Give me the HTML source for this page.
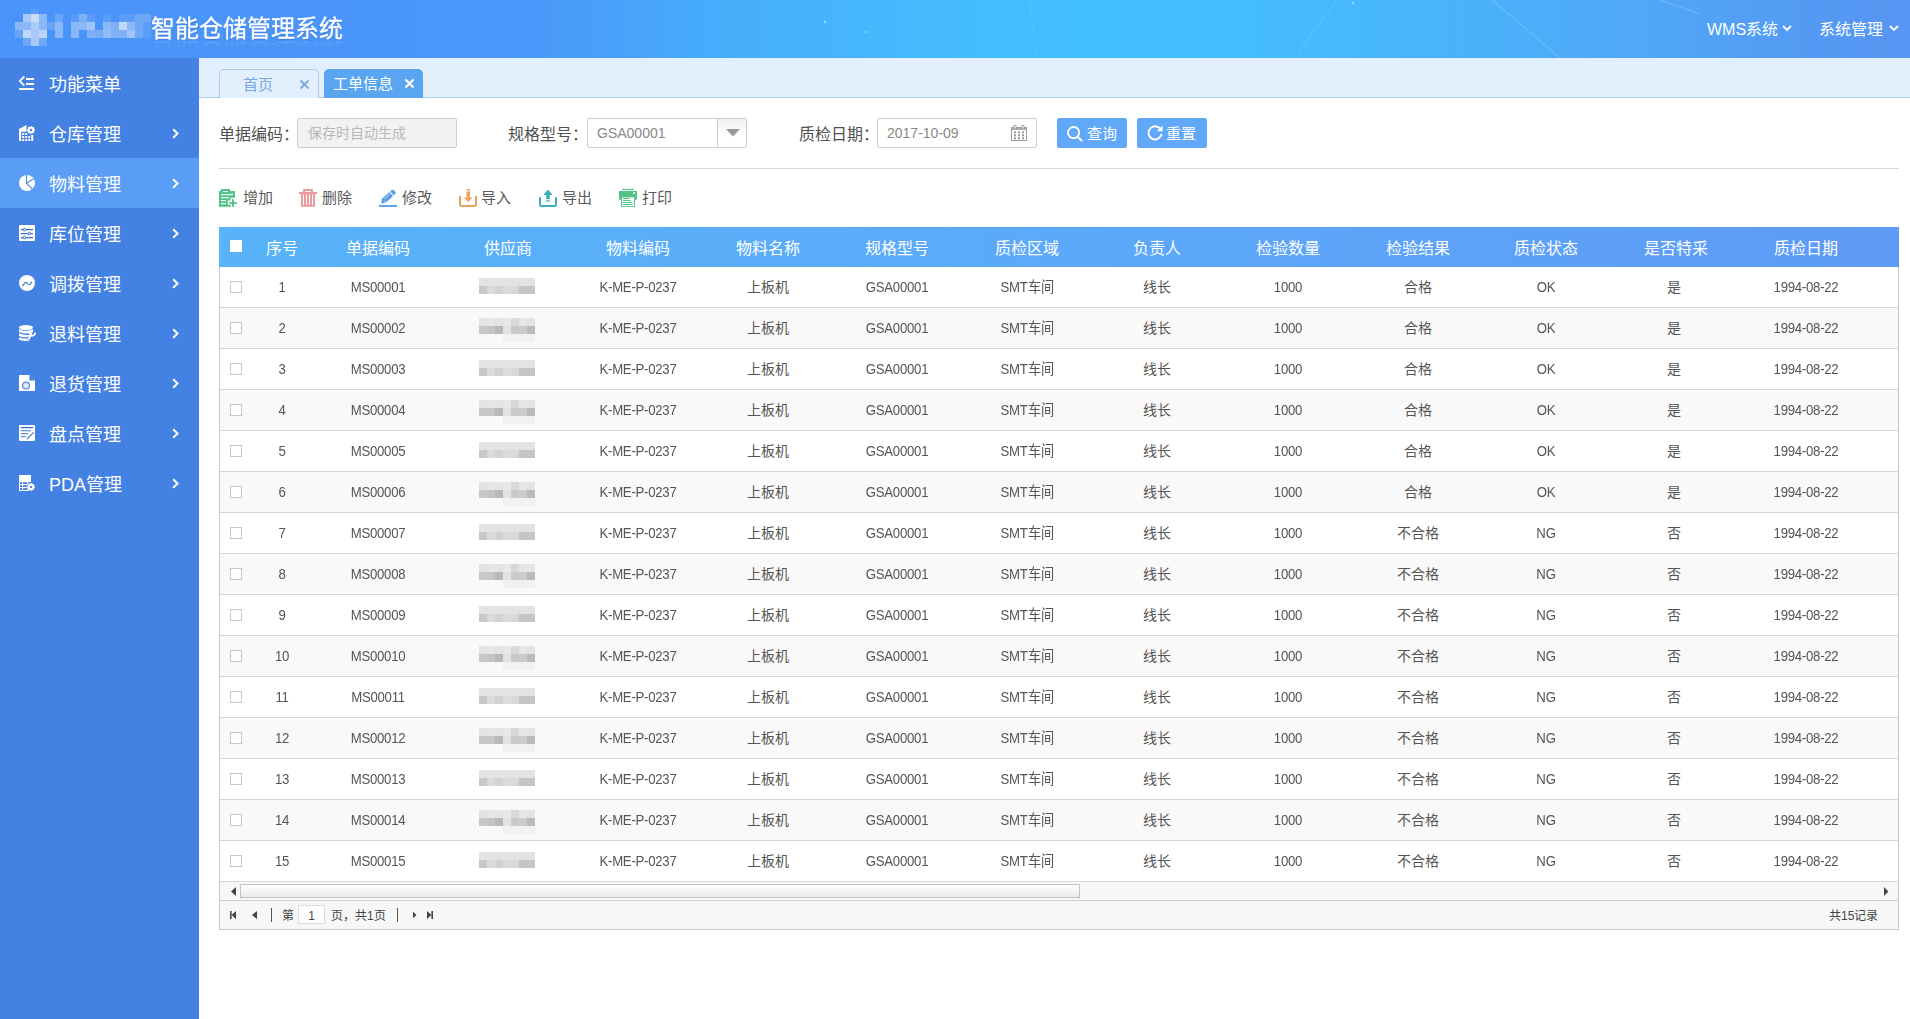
<!DOCTYPE html><html lang="zh-CN"><head><meta charset="utf-8"><style>
*{margin:0;padding:0;box-sizing:border-box}
html,body{width:1910px;height:1019px;overflow:hidden;background:#fff;font-family:"Liberation Sans",sans-serif;color:#333}
.abs{position:absolute}
svg{position:absolute;overflow:visible}
#hdr{position:absolute;left:0;top:0;width:1910px;height:58px;
 background:linear-gradient(90deg,#4993fa 0%,#4a95f9 20%,#4a98f9 28%,#47acfb 37%,#45b9fd 47%,#44c0fe 57%,#46bbfc 68%,#49b3fa 76%,#50a8f7 86%,#5499f3 95%,#5796f2 100%)}
#title{position:absolute;left:151px;top:9px;font-size:24px;-webkit-box-reflect:below -8px linear-gradient(transparent 66%,rgba(255,255,255,0.14) 88%);color:#fff;white-space:nowrap;text-shadow:0 1px 1px rgba(0,40,120,.25);-webkit-text-stroke:0.3px #fff}
.mz{position:absolute;width:8px;height:8px}
.hmenu{position:absolute;top:16px;font-size:16px;color:#fff;white-space:nowrap}
#side{position:absolute;left:0;top:58px;width:199px;height:961px;background:#4382e2}
.si{position:absolute;left:0;width:199px;height:50px;color:#fff;font-size:18px}
.si.act{background:#5a9df7}
.si .t{position:absolute;left:49px;top:12px;white-space:nowrap}
.si svg{left:19px;top:17px;width:16px;height:16px}
.si svg.chev{left:172px;top:20px;width:7px;height:11px}
#tabbar{position:absolute;left:199px;top:58px;width:1711px;height:40px;background:#e2f0fd;border-bottom:1px solid #a9cdec}
.tab{position:absolute;top:69px;height:29px;width:99px;border-radius:5px 5px 0 0;font-size:15px;white-space:nowrap}
.tab .t{position:absolute;top:3px}
.lbl{position:absolute;font-size:16px;color:#505050;white-space:nowrap;top:121px}
.inp{position:absolute;top:118px;height:30px;width:160px;border:1px solid #cdcdcd;border-radius:2px;font-size:14px;white-space:nowrap}
.btn{position:absolute;top:118px;height:30px;width:70px;background:#61a8f8;border-radius:2px;color:#fff;font-size:15px;white-space:nowrap}
.tb{position:absolute;top:186px;font-size:15px;color:#5a5a5a;white-space:nowrap}
.tbi{width:18px;height:18px}
#tbl{position:absolute;left:219px;top:227px;width:1680px;height:703px;border:1px solid #c8c8c8;border-top:none}
#th{position:absolute;left:-1px;top:0;width:1680px;height:40px;background:linear-gradient(90deg,#58b3f8 0%,#5aadf8 35%,#5da5f8 65%,#5e9bf6 100%);color:#fff;font-size:16px}
.row{position:absolute;left:0;width:1678px;height:41px;border-bottom:1px solid #d6d6d6;font-size:14px;color:#555}
.row.alt{background:#f9f9f9}
.c{position:absolute;top:0;text-align:center;white-space:nowrap;line-height:17px}
#th .c{top:13px;margin-left:1px}
.row .c{top:12px}
.row .lat{font-size:15px;letter-spacing:-0.3px;transform:scaleX(0.88);top:11px}
.cb{position:absolute;left:10px;width:12px;height:12px;border:1px solid #c8c8c8;background:#fff}
.bl{position:absolute;width:8px;height:8px}
#hs{position:absolute;left:0;top:655px;width:1678px;height:19px;background:#f7f7f7;border-bottom:1px solid #cfcfcf}
#pg{position:absolute;left:0;top:674px;width:1678px;height:28px;background:#f7f7f7;font-size:12px;color:#444}
</style></head><body>
<div id="hdr">
<div class="mz" style="left:31px;top:9px;height:5px;background:#5a9cf8"></div>
<div class="mz" style="left:23px;top:14px;height:8px;background:#a8c8f8"></div>
<div class="mz" style="left:31px;top:14px;height:8px;background:#c8dcfa"></div>
<div class="mz" style="left:39px;top:14px;height:8px;background:#8ab8f8"></div>
<div class="mz" style="left:55px;top:14px;height:8px;background:#6aa4f8"></div>
<div class="mz" style="left:71px;top:14px;height:8px;background:#5a9cf8"></div>
<div class="mz" style="left:79px;top:14px;height:8px;background:#7ab0f8"></div>
<div class="mz" style="left:87px;top:14px;height:8px;background:#5a9cf8"></div>
<div class="mz" style="left:103px;top:14px;height:8px;background:#5a9cf8"></div>
<div class="mz" style="left:119px;top:14px;height:8px;background:#5a9cf8"></div>
<div class="mz" style="left:127px;top:14px;height:8px;background:#5a9cf8"></div>
<div class="mz" style="left:135px;top:14px;height:8px;background:#70a8f8"></div>
<div class="mz" style="left:143px;top:14px;height:8px;background:#70a8f8"></div>
<div class="mz" style="left:15px;top:22px;height:8px;background:#88b8f8"></div>
<div class="mz" style="left:23px;top:22px;height:8px;background:#8ab8f8"></div>
<div class="mz" style="left:31px;top:22px;height:8px;background:#a8ccf8"></div>
<div class="mz" style="left:39px;top:22px;height:8px;background:#8ab8f8"></div>
<div class="mz" style="left:47px;top:22px;height:8px;background:#6aa4f8"></div>
<div class="mz" style="left:55px;top:22px;height:8px;background:#8ab8f8"></div>
<div class="mz" style="left:71px;top:22px;height:8px;background:#8ab8f8"></div>
<div class="mz" style="left:79px;top:22px;height:8px;background:#8ab8f8"></div>
<div class="mz" style="left:87px;top:22px;height:8px;background:#a0c4f8"></div>
<div class="mz" style="left:103px;top:22px;height:8px;background:#8ab8f8"></div>
<div class="mz" style="left:111px;top:22px;height:8px;background:#80b0f8"></div>
<div class="mz" style="left:119px;top:22px;height:8px;background:#c0d8fa"></div>
<div class="mz" style="left:127px;top:22px;height:8px;background:#8ab8f8"></div>
<div class="mz" style="left:135px;top:22px;height:8px;background:#70a8f8"></div>
<div class="mz" style="left:143px;top:22px;height:8px;background:#5a9cf8"></div>
<div class="mz" style="left:15px;top:30px;height:8px;background:#6aa4f8"></div>
<div class="mz" style="left:23px;top:30px;height:8px;background:#c0d8fa"></div>
<div class="mz" style="left:31px;top:30px;height:8px;background:#a8c8f8"></div>
<div class="mz" style="left:39px;top:30px;height:8px;background:#b8d4fa"></div>
<div class="mz" style="left:55px;top:30px;height:8px;background:#88b8f8"></div>
<div class="mz" style="left:71px;top:30px;height:8px;background:#88b8f8"></div>
<div class="mz" style="left:87px;top:30px;height:8px;background:#80b0f8"></div>
<div class="mz" style="left:95px;top:30px;height:8px;background:#78acf8"></div>
<div class="mz" style="left:103px;top:30px;height:8px;background:#90bcf8"></div>
<div class="mz" style="left:111px;top:30px;height:8px;background:#80b0f8"></div>
<div class="mz" style="left:119px;top:30px;height:8px;background:#80b0f8"></div>
<div class="mz" style="left:127px;top:30px;height:8px;background:#a0c4f8"></div>
<div class="mz" style="left:135px;top:30px;height:8px;background:#70a8f8"></div>
<div class="mz" style="left:143px;top:30px;height:8px;background:#5a9cf8"></div>
<div class="mz" style="left:23px;top:38px;height:8px;background:#70a8f8"></div>
<div class="mz" style="left:31px;top:38px;height:8px;background:#a8c8f8"></div>
<div class="mz" style="left:39px;top:38px;height:8px;background:#70a8f8"></div>
<svg viewBox="0 0 1910 58" style="left:0;top:0;width:1910px;height:58px"><g stroke="#fff" stroke-width="1" fill="none"><path d="M1492 0 L1560 58" stroke-opacity="0.22"/><path d="M1337 0 L1298 52" stroke-opacity="0.15"/><path d="M1660 0 L1700 14" stroke-opacity="0.2"/><path d="M1030 0 L1036 58" stroke-opacity="0.08"/></g><g fill="#fff"><circle cx="825" cy="22" r="1.3" fill-opacity="0.5"/><circle cx="866" cy="32" r="1.1" fill-opacity="0.4"/><circle cx="1353" cy="3" r="1.3" fill-opacity="0.4"/></g></svg>
<div id="title">智能仓储管理系统</div>
<div class="hmenu" style="left:1707px">WMS系统</div><svg viewBox="0 0 10 7" style="width:10px;height:7px;top:25px;left:1782px"><path d="M1 1 L5 5 L9 1" stroke="#fff" stroke-width="1.8" fill="none"/></svg><div class="hmenu" style="left:1819px">系统管理</div><svg viewBox="0 0 10 7" style="width:10px;height:7px;top:25px;left:1889px"><path d="M1 1 L5 5 L9 1" stroke="#fff" stroke-width="1.8" fill="none"/></svg>
</div>
<div id="side"></div>
<div class="si" style="top:58px"><svg viewBox="0 0 16 16"><path d="M5.3 1.5 L0.8 6.1 L5.3 10.7" stroke="#fff" stroke-width="1.8" fill="none"/><rect x="7" y="3" width="8" height="2" fill="#fff"/><rect x="7" y="8" width="8" height="2" fill="#fff"/><rect x="0" y="13" width="15" height="2" fill="#fff"/></svg><div class="t">功能菜单</div></div>
<div class="si" style="top:108px"><svg viewBox="0 0 16 16"><path d="M0 4 L7.5 0 L7.5 6.8 L2.2 6.8 L2.2 16 L0 16 Z" fill="#fff"/><g fill="#fff"><rect x="3.2" y="8" width="2" height="2"/><rect x="6.2" y="8" width="2" height="2"/><rect x="3.2" y="11" width="2" height="2"/><rect x="6.2" y="11" width="2" height="2"/><rect x="9.2" y="11" width="2" height="2"/><rect x="3.2" y="14" width="2" height="2"/><rect x="6.2" y="14" width="2" height="2"/><rect x="9.2" y="14" width="2" height="2"/><rect x="12.2" y="10" width="2" height="6"/></g><circle cx="12" cy="5" r="2.6" stroke="#fff" stroke-width="1.8" fill="none"/><g stroke="#fff" stroke-width="1.3"><path d="M12 1.2V8.8M8.2 5H15.8M9.3 2.3L14.7 7.7M14.7 2.3L9.3 7.7"/></g><circle cx="12" cy="5" r="1.2" fill="#4382e2"/></svg><div class="t">仓库管理</div><svg class="chev" viewBox="0 0 7 11"><path d="M1.2 1.2 L5.5 5.5 L1.2 9.8" stroke="#fff" stroke-width="2" fill="none"/></svg></div>
<div class="si act" style="top:158px"><svg viewBox="0 0 16 16"><circle cx="8" cy="8" r="8" fill="#fff"/><path d="M7.5 0 V8.3 L14.6 3.8 M7.5 8.3 L13.4 14" stroke="#4f88dc" stroke-width="1.1" fill="none"/></svg><div class="t">物料管理</div><svg class="chev" viewBox="0 0 7 11"><path d="M1.2 1.2 L5.5 5.5 L1.2 9.8" stroke="#fff" stroke-width="2" fill="none"/></svg></div>
<div class="si" style="top:208px"><svg viewBox="0 0 16 16"><rect x="0" y="0" width="16" height="16" rx="0.8" fill="#fff"/><g stroke="#3f70c0" stroke-width="1.2"><path d="M2 4.6H14M2 8.6H14M2 12.6H14"/></g><g fill="#fff" stroke="#3f70c0" stroke-width="1"><circle cx="5.4" cy="4.6" r="1.3"/><circle cx="10.4" cy="8.6" r="1.3"/><circle cx="5.4" cy="12.6" r="1.3"/></g></svg><div class="t">库位管理</div><svg class="chev" viewBox="0 0 7 11"><path d="M1.2 1.2 L5.5 5.5 L1.2 9.8" stroke="#fff" stroke-width="2" fill="none"/></svg></div>
<div class="si" style="top:258px"><svg viewBox="0 0 16 16"><circle cx="8" cy="8" r="8" fill="#fff"/><path d="M3.4 11 L6 7.8 Q7 7 8 8 L9.3 9.3 Q10.6 10 11.5 8.8 L12.8 6.6" stroke="#4a7fd0" stroke-width="1.2" fill="none"/></svg><div class="t">调拨管理</div><svg class="chev" viewBox="0 0 7 11"><path d="M1.2 1.2 L5.5 5.5 L1.2 9.8" stroke="#fff" stroke-width="2" fill="none"/></svg></div>
<div class="si" style="top:308px"><svg viewBox="0 0 16 16"><ellipse cx="7" cy="2.6" rx="7" ry="2.6" fill="#fff"/><path d="M0 4.2 Q7 7.6 14 4.2 V7 Q7 10.2 0 7Z" fill="#fff"/><path d="M0 8.2 Q6 11 11.4 9.4 L10.4 11.6 Q5 13 0 11Z" fill="#fff"/><path d="M0 12.2 Q4 14 8.4 13.4 L7.8 15.8 Q3.5 16.3 0 14.8Z" fill="#fff"/><path d="M9 15.2 L12.4 8.8" stroke="#fff" stroke-width="2.1" stroke-linecap="round"/><path d="M12.1 6.4 A2.4 2.4 0 1 0 15.8 7.6" stroke="#fff" stroke-width="1.7" fill="none"/><circle cx="9.2" cy="14.6" r="0.55" fill="#4a7fd0"/></svg><div class="t">退料管理</div><svg class="chev" viewBox="0 0 7 11"><path d="M1.2 1.2 L5.5 5.5 L1.2 9.8" stroke="#fff" stroke-width="2" fill="none"/></svg></div>
<div class="si" style="top:358px"><svg viewBox="0 0 16 16"><path d="M0 0.6 Q0 0 0.6 0 H10.4 L16 5.4 V15.4 Q16 16 15.4 16 H0.6 Q0 16 0 15.4Z" fill="#fff"/><path d="M10.4 0 V5.4 H16Z" fill="#4a80da"/><circle cx="7" cy="10.6" r="4" fill="#4a7fd0"/><circle cx="7" cy="10.6" r="3" fill="#bcd6f8"/><g stroke="#fff" stroke-width="0.8"><path d="M7 8V13.2M4.8 9.3L9.2 11.9M9.2 9.3L4.8 11.9"/></g></svg><div class="t">退货管理</div><svg class="chev" viewBox="0 0 7 11"><path d="M1.2 1.2 L5.5 5.5 L1.2 9.8" stroke="#fff" stroke-width="2" fill="none"/></svg></div>
<div class="si" style="top:408px"><svg viewBox="0 0 16 16"><rect x="0" y="0" width="16" height="16" rx="1.2" fill="#fff"/><g stroke="#3f6fc0" stroke-width="1.1" stroke-linecap="round"><path d="M2.2 2.6H13.8M2.2 5.7H11.5M2.2 8.7H8.6M2.2 11.7H6.8"/><path d="M8.3 13.8L14.3 7.6" stroke-dasharray="1.2 0.5"/></g></svg><div class="t">盘点管理</div><svg class="chev" viewBox="0 0 7 11"><path d="M1.2 1.2 L5.5 5.5 L1.2 9.8" stroke="#fff" stroke-width="2" fill="none"/></svg></div>
<div class="si" style="top:458px"><svg viewBox="0 0 16 16"><rect x="0" y="0" width="12" height="16" fill="#fff"/><g fill="#3f6fc0"><rect x="1" y="7.2" width="2" height="1.8"/><rect x="1" y="10.2" width="2" height="1.8"/><rect x="1" y="13.2" width="2" height="1.8"/><rect x="4" y="7.2" width="4" height="1.8" fill="#4a82e0"/><rect x="4" y="10.2" width="4" height="1.8" fill="#4a82e0"/><rect x="4" y="13.2" width="4" height="1.8" fill="#4a82e0"/><rect x="9" y="7.2" width="3" height="2" fill="#4a82e0"/></g><circle cx="12" cy="12" r="4.2" fill="#4382e2"/><circle cx="12" cy="12" r="2.5" stroke="#fff" stroke-width="1.8" fill="none"/><g stroke="#fff" stroke-width="1.4"><path d="M12 8.3V15.7M8.3 12H15.7M9.4 9.4L14.6 14.6M14.6 9.4L9.4 14.6"/></g><circle cx="12" cy="12" r="1.1" fill="#3f6fc0"/></svg><div class="t">PDA管理</div><svg class="chev" viewBox="0 0 7 11"><path d="M1.2 1.2 L5.5 5.5 L1.2 9.8" stroke="#fff" stroke-width="2" fill="none"/></svg></div>
<div id="tabbar"></div>
<div class="tab" style="left:219px;width:100px;background:#e2f0fd;border:1px solid #a9cdec;border-bottom:none;color:#7aa7e0"><div class="t" style="left:23px">首页</div><svg viewBox="0 0 11 11" style="width:11px;height:11px;left:79px;top:9px"><path d="M1.5 1.5L9.5 9.5M9.5 1.5L1.5 9.5" stroke="#7aa7e0" stroke-width="1.8"/></svg></div>
<div class="tab" style="left:324px;background:#5aa5f2;color:#fff"><div class="t" style="left:9px">工单信息</div><svg viewBox="0 0 11 11" style="width:11px;height:11px;left:80px;top:9px"><path d="M1.5 1.5L9.5 9.5M9.5 1.5L1.5 9.5" stroke="#fff" stroke-width="2.2"/></svg></div>
<div class="lbl" style="left:219px">单据编码：</div>
<div class="inp" style="left:297px;background:#f2f2f2"><span style="position:absolute;left:10px;top:3px;color:#b8b8b8">保存时自动生成</span></div>
<div class="lbl" style="left:508px">规格型号：</div>
<div class="inp" style="left:587px;background:#fff"><span style="position:absolute;left:9px;top:6px;color:#888" class="lat">GSA00001</span><div style="position:absolute;left:129px;top:0;width:1px;height:28px;background:#cdcdcd"></div><div style="position:absolute;left:130px;top:0;width:28px;height:28px;background:linear-gradient(#f0f0f0,#fff 60%);border-radius:0 3px 3px 0"></div><svg viewBox="0 0 14 8" style="left:138px;top:10px;width:14px;height:8px"><path d="M0 0H14L7 7.6Z" fill="#999"/></svg></div>
<div class="lbl" style="left:799px">质检日期：</div>
<div class="inp" style="left:877px;background:#fff"><span style="position:absolute;left:9px;top:6px;color:#888" class="lat">2017-10-09</span><svg viewBox="0 0 16 16" style="left:133px;top:6px;width:16px;height:16px"><rect x="0.5" y="2.5" width="15" height="13" fill="none" stroke="#999" stroke-width="1"/><rect x="0.5" y="2.5" width="15" height="2.5" fill="#aaa"/><rect x="3" y="0.5" width="2" height="3.5" fill="#fff" stroke="#999" stroke-width="0.8"/><rect x="11" y="0.5" width="2" height="3.5" fill="#fff" stroke="#999" stroke-width="0.8"/><g fill="#999"><rect x="3" y="6.3" width="2" height="2"/><rect x="7" y="6.3" width="2" height="2"/><rect x="11" y="6.3" width="2" height="2"/><rect x="3" y="9.3" width="2" height="2"/><rect x="7" y="9.3" width="2" height="2"/><rect x="11" y="9.3" width="2" height="2"/><rect x="3" y="12.3" width="2" height="2"/><rect x="7" y="12.3" width="2" height="2"/><rect x="11" y="12.3" width="2" height="2"/></g></svg></div>
<div class="btn" style="left:1057px"><svg viewBox="0 0 16 16" style="left:9.5px;top:8px;width:16px;height:16px"><circle cx="6.6" cy="6.6" r="5.6" stroke="#fff" stroke-width="1.8" fill="none"/><path d="M10.6 10.6L15 15" stroke="#fff" stroke-width="2"/></svg><span style="position:absolute;left:30px;top:4px">查询</span></div>
<div class="btn" style="left:1137px"><svg viewBox="0 0 16 16" style="left:10px;top:7px;width:16px;height:16px"><path d="M13.6 4.2 A6.6 6.6 0 1 0 14.6 9" stroke="#fff" stroke-width="1.9" fill="none"/><path d="M15.6 0.5 V6.2 H9.9Z" fill="#fff"/></svg><span style="position:absolute;left:29px;top:4px">重置</span></div>
<div class="abs" style="left:219px;top:168px;width:1680px;height:1px;background:#d8d8d8"></div>
<svg viewBox="0 0 1910 1019" style="left:0;top:0;width:1910px;height:1019px">
<g fill="#52c386">
 <rect x="221" y="189" width="9" height="2.2"/>
 <path d="M219 191 H235 V197.7 H230.5 V200.6 H227.8 V204.8 H230.8 V206.8 H219Z"/>
 <rect x="232" y="199.2" width="1.9" height="7.6"/>
 <rect x="229.1" y="202.2" width="7.8" height="1.7"/>
</g>
<g fill="#fff"><rect x="223" y="191" width="5" height="1"/><rect x="221" y="194" width="12" height="1.2"/><rect x="221" y="197" width="8" height="1.2"/><rect x="221" y="200" width="5" height="1.2"/><rect x="221" y="203" width="5" height="1.2"/></g>
<g fill="#e99a9c">
 <path d="M303.1 189.1 H312.9 V192 H310.8 V191 H305 V192 H303.1Z"/>
 <rect x="299" y="192" width="18" height="2"/>
 <rect x="301" y="193.9" width="14" height="12.9"/>
</g>
<g fill="#fff"><rect x="303" y="194.5" width="1" height="10.3"/><rect x="306" y="194.5" width="1" height="10.3"/><rect x="309" y="194.5" width="1" height="10.3"/><rect x="312" y="194.5" width="1" height="10.3"/></g>
<g transform="translate(388 197) rotate(-42)" fill="#5a9de9">
 <path d="M-9.2 0.3 L-6 -2.7 H4.3 V2.7 H-6Z"/>
 <path d="M5.4 -2.7 H7.3 Q9 -2.7 9 0 Q9 2.7 7.3 2.7 H5.4Z"/>
 <path d="M-3.8 -1.2 H3.2" stroke="#fff" stroke-width="0.9" stroke-dasharray="1.3 0.6"/>
 <path d="M-6 1.2 L-5 2.2" stroke="#fff" stroke-width="0.8"/>
</g>
<rect x="379" y="205" width="18" height="1.9" fill="#5a9de9"/>
<g fill="#e9a35c">
 <path d="M460 196 V204.8 Q460 206 461.2 206 H474.8 Q476 206 476 204.8 V196" stroke="#e9a35c" stroke-width="2" fill="none"/>
 <rect x="466.5" y="189" width="3.5" height="1.4"/>
 <rect x="466.5" y="191.4" width="3.5" height="6.3"/>
 <path d="M463.8 197.5 H472.7 L468.25 201.9Z"/>
</g>
<g fill="#3aafc1">
 <path d="M540 197.3 V204.8 Q540 206 541.2 206 H554.8 Q556 206 556 204.8 V197.3" stroke="#3aafc1" stroke-width="2" fill="none"/>
 <path d="M548 189.4 L552.7 195 H543.3Z"/>
 <rect x="546.2" y="195" width="3.6" height="4"/>
 <rect x="546.2" y="200.3" width="3.6" height="1.3"/>
</g>
<g fill="#53c487">
 <rect x="622" y="188.9" width="11.8" height="1"/>
 <rect x="619" y="190.9" width="18" height="8.8"/>
 <rect x="621" y="196.7" width="14" height="10.3"/>
</g>
<g fill="#fff"><rect x="633" y="192" width="2" height="1.9"/><rect x="622" y="197.4" width="12" height="8.8"/></g>
<g fill="#53c487"><rect x="623" y="198" width="6.8" height="1"/><rect x="623" y="200" width="7.9" height="1"/><rect x="623" y="202" width="9" height="1"/><rect x="623" y="204" width="9.9" height="1"/></g>
</svg>
<div class="tb" style="left:243px">增加</div>
<div class="tb" style="left:322px">删除</div>
<div class="tb" style="left:402px">修改</div>
<div class="tb" style="left:481px">导入</div>
<div class="tb" style="left:562px">导出</div>
<div class="tb" style="left:642px">打印</div>
<div id="tbl">
<div id="th"><div class="cb" style="top:13px;left:11px;border:none"></div><div class="c" style="left:2.0px;width:120px">序号</div><div class="c" style="left:98.0px;width:120px">单据编码</div><div class="c" style="left:228.0px;width:120px">供应商</div><div class="c" style="left:358.0px;width:120px">物料编码</div><div class="c" style="left:488.0px;width:120px">物料名称</div><div class="c" style="left:617.0px;width:120px">规格型号</div><div class="c" style="left:747.0px;width:120px">质检区域</div><div class="c" style="left:877.0px;width:120px">负责人</div><div class="c" style="left:1008.0px;width:120px">检验数量</div><div class="c" style="left:1138.0px;width:120px">检验结果</div><div class="c" style="left:1266.0px;width:120px">质检状态</div><div class="c" style="left:1396.0px;width:120px">是否特采</div><div class="c" style="left:1526.0px;width:120px">质检日期</div></div>
<div class="row" style="top:40px"><div class="cb" style="top:14px"></div><div class="bl" style="left:259px;top:11px;width:56px;height:8px;background:#e3e3e3"></div><div class="bl" style="left:259px;top:19px;width:8px;height:8px;background:#c8c8c8"></div><div class="bl" style="left:267px;top:19px;width:8px;height:8px;background:#dadada"></div><div class="bl" style="left:275px;top:19px;width:8px;height:8px;background:#d2d2d2"></div><div class="bl" style="left:283px;top:19px;width:8px;height:8px;background:#dcdcdc"></div><div class="bl" style="left:291px;top:19px;width:8px;height:8px;background:#d8d8d8"></div><div class="bl" style="left:299px;top:19px;width:16px;height:8px;background:#c5c5c5"></div><div class="c lat" style="left:2.0px;width:120px">1</div><div class="c lat" style="left:98.0px;width:120px">MS00001</div><div class="c" style="left:228.0px;width:120px"></div><div class="c lat" style="left:358.0px;width:120px">K-ME-P-0237</div><div class="c" style="left:488.0px;width:120px">上板机</div><div class="c lat" style="left:617.0px;width:120px">GSA00001</div><div class="c lat" style="left:747.0px;width:120px">SMT车间</div><div class="c" style="left:877.0px;width:120px">线长</div><div class="c lat" style="left:1008.0px;width:120px">1000</div><div class="c" style="left:1138.0px;width:120px">合格</div><div class="c lat" style="left:1266.0px;width:120px">OK</div><div class="c" style="left:1394.0px;width:120px">是</div><div class="c lat" style="left:1526.0px;width:120px">1994-08-22</div></div>
<div class="row alt" style="top:81px"><div class="cb" style="top:14px"></div><div class="bl" style="left:259px;top:10px;width:8px;height:8px;background:#e2e2e2"></div><div class="bl" style="left:267px;top:10px;width:8px;height:8px;background:#e6e6e6"></div><div class="bl" style="left:275px;top:10px;width:8px;height:8px;background:#e4e4e4"></div><div class="bl" style="left:283px;top:10px;width:8px;height:8px;background:#e8e8e8"></div><div class="bl" style="left:291px;top:10px;width:8px;height:8px;background:#d8d8d8"></div><div class="bl" style="left:299px;top:10px;width:8px;height:8px;background:#e6e6e6"></div><div class="bl" style="left:307px;top:10px;width:8px;height:8px;background:#e4e4e4"></div><div class="bl" style="left:259px;top:18px;width:8px;height:8px;background:#c8c8c8"></div><div class="bl" style="left:267px;top:18px;width:8px;height:8px;background:#c6c6c6"></div><div class="bl" style="left:275px;top:18px;width:8px;height:8px;background:#b8b8b8"></div><div class="bl" style="left:283px;top:18px;width:8px;height:8px;background:#e2e2e2"></div><div class="bl" style="left:291px;top:18px;width:8px;height:8px;background:#cacaca"></div><div class="bl" style="left:299px;top:18px;width:8px;height:8px;background:#cccccc"></div><div class="bl" style="left:307px;top:18px;width:8px;height:8px;background:#bababa"></div><div class="bl" style="left:283px;top:26px;width:32px;height:8px;background:#f1f1f1"></div><div class="c lat" style="left:2.0px;width:120px">2</div><div class="c lat" style="left:98.0px;width:120px">MS00002</div><div class="c" style="left:228.0px;width:120px"></div><div class="c lat" style="left:358.0px;width:120px">K-ME-P-0237</div><div class="c" style="left:488.0px;width:120px">上板机</div><div class="c lat" style="left:617.0px;width:120px">GSA00001</div><div class="c lat" style="left:747.0px;width:120px">SMT车间</div><div class="c" style="left:877.0px;width:120px">线长</div><div class="c lat" style="left:1008.0px;width:120px">1000</div><div class="c" style="left:1138.0px;width:120px">合格</div><div class="c lat" style="left:1266.0px;width:120px">OK</div><div class="c" style="left:1394.0px;width:120px">是</div><div class="c lat" style="left:1526.0px;width:120px">1994-08-22</div></div>
<div class="row" style="top:122px"><div class="cb" style="top:14px"></div><div class="bl" style="left:259px;top:11px;width:56px;height:8px;background:#e3e3e3"></div><div class="bl" style="left:259px;top:19px;width:8px;height:8px;background:#c8c8c8"></div><div class="bl" style="left:267px;top:19px;width:8px;height:8px;background:#dadada"></div><div class="bl" style="left:275px;top:19px;width:8px;height:8px;background:#d2d2d2"></div><div class="bl" style="left:283px;top:19px;width:8px;height:8px;background:#dcdcdc"></div><div class="bl" style="left:291px;top:19px;width:8px;height:8px;background:#d8d8d8"></div><div class="bl" style="left:299px;top:19px;width:16px;height:8px;background:#c5c5c5"></div><div class="c lat" style="left:2.0px;width:120px">3</div><div class="c lat" style="left:98.0px;width:120px">MS00003</div><div class="c" style="left:228.0px;width:120px"></div><div class="c lat" style="left:358.0px;width:120px">K-ME-P-0237</div><div class="c" style="left:488.0px;width:120px">上板机</div><div class="c lat" style="left:617.0px;width:120px">GSA00001</div><div class="c lat" style="left:747.0px;width:120px">SMT车间</div><div class="c" style="left:877.0px;width:120px">线长</div><div class="c lat" style="left:1008.0px;width:120px">1000</div><div class="c" style="left:1138.0px;width:120px">合格</div><div class="c lat" style="left:1266.0px;width:120px">OK</div><div class="c" style="left:1394.0px;width:120px">是</div><div class="c lat" style="left:1526.0px;width:120px">1994-08-22</div></div>
<div class="row alt" style="top:163px"><div class="cb" style="top:14px"></div><div class="bl" style="left:259px;top:10px;width:8px;height:8px;background:#e2e2e2"></div><div class="bl" style="left:267px;top:10px;width:8px;height:8px;background:#e6e6e6"></div><div class="bl" style="left:275px;top:10px;width:8px;height:8px;background:#e4e4e4"></div><div class="bl" style="left:283px;top:10px;width:8px;height:8px;background:#e8e8e8"></div><div class="bl" style="left:291px;top:10px;width:8px;height:8px;background:#d8d8d8"></div><div class="bl" style="left:299px;top:10px;width:8px;height:8px;background:#e6e6e6"></div><div class="bl" style="left:307px;top:10px;width:8px;height:8px;background:#e4e4e4"></div><div class="bl" style="left:259px;top:18px;width:8px;height:8px;background:#c8c8c8"></div><div class="bl" style="left:267px;top:18px;width:8px;height:8px;background:#c6c6c6"></div><div class="bl" style="left:275px;top:18px;width:8px;height:8px;background:#b8b8b8"></div><div class="bl" style="left:283px;top:18px;width:8px;height:8px;background:#e2e2e2"></div><div class="bl" style="left:291px;top:18px;width:8px;height:8px;background:#cacaca"></div><div class="bl" style="left:299px;top:18px;width:8px;height:8px;background:#cccccc"></div><div class="bl" style="left:307px;top:18px;width:8px;height:8px;background:#bababa"></div><div class="bl" style="left:283px;top:26px;width:32px;height:8px;background:#f1f1f1"></div><div class="c lat" style="left:2.0px;width:120px">4</div><div class="c lat" style="left:98.0px;width:120px">MS00004</div><div class="c" style="left:228.0px;width:120px"></div><div class="c lat" style="left:358.0px;width:120px">K-ME-P-0237</div><div class="c" style="left:488.0px;width:120px">上板机</div><div class="c lat" style="left:617.0px;width:120px">GSA00001</div><div class="c lat" style="left:747.0px;width:120px">SMT车间</div><div class="c" style="left:877.0px;width:120px">线长</div><div class="c lat" style="left:1008.0px;width:120px">1000</div><div class="c" style="left:1138.0px;width:120px">合格</div><div class="c lat" style="left:1266.0px;width:120px">OK</div><div class="c" style="left:1394.0px;width:120px">是</div><div class="c lat" style="left:1526.0px;width:120px">1994-08-22</div></div>
<div class="row" style="top:204px"><div class="cb" style="top:14px"></div><div class="bl" style="left:259px;top:11px;width:56px;height:8px;background:#e3e3e3"></div><div class="bl" style="left:259px;top:19px;width:8px;height:8px;background:#c8c8c8"></div><div class="bl" style="left:267px;top:19px;width:8px;height:8px;background:#dadada"></div><div class="bl" style="left:275px;top:19px;width:8px;height:8px;background:#d2d2d2"></div><div class="bl" style="left:283px;top:19px;width:8px;height:8px;background:#dcdcdc"></div><div class="bl" style="left:291px;top:19px;width:8px;height:8px;background:#d8d8d8"></div><div class="bl" style="left:299px;top:19px;width:16px;height:8px;background:#c5c5c5"></div><div class="c lat" style="left:2.0px;width:120px">5</div><div class="c lat" style="left:98.0px;width:120px">MS00005</div><div class="c" style="left:228.0px;width:120px"></div><div class="c lat" style="left:358.0px;width:120px">K-ME-P-0237</div><div class="c" style="left:488.0px;width:120px">上板机</div><div class="c lat" style="left:617.0px;width:120px">GSA00001</div><div class="c lat" style="left:747.0px;width:120px">SMT车间</div><div class="c" style="left:877.0px;width:120px">线长</div><div class="c lat" style="left:1008.0px;width:120px">1000</div><div class="c" style="left:1138.0px;width:120px">合格</div><div class="c lat" style="left:1266.0px;width:120px">OK</div><div class="c" style="left:1394.0px;width:120px">是</div><div class="c lat" style="left:1526.0px;width:120px">1994-08-22</div></div>
<div class="row alt" style="top:245px"><div class="cb" style="top:14px"></div><div class="bl" style="left:259px;top:10px;width:8px;height:8px;background:#e2e2e2"></div><div class="bl" style="left:267px;top:10px;width:8px;height:8px;background:#e6e6e6"></div><div class="bl" style="left:275px;top:10px;width:8px;height:8px;background:#e4e4e4"></div><div class="bl" style="left:283px;top:10px;width:8px;height:8px;background:#e8e8e8"></div><div class="bl" style="left:291px;top:10px;width:8px;height:8px;background:#d8d8d8"></div><div class="bl" style="left:299px;top:10px;width:8px;height:8px;background:#e6e6e6"></div><div class="bl" style="left:307px;top:10px;width:8px;height:8px;background:#e4e4e4"></div><div class="bl" style="left:259px;top:18px;width:8px;height:8px;background:#c8c8c8"></div><div class="bl" style="left:267px;top:18px;width:8px;height:8px;background:#c6c6c6"></div><div class="bl" style="left:275px;top:18px;width:8px;height:8px;background:#b8b8b8"></div><div class="bl" style="left:283px;top:18px;width:8px;height:8px;background:#e2e2e2"></div><div class="bl" style="left:291px;top:18px;width:8px;height:8px;background:#cacaca"></div><div class="bl" style="left:299px;top:18px;width:8px;height:8px;background:#cccccc"></div><div class="bl" style="left:307px;top:18px;width:8px;height:8px;background:#bababa"></div><div class="bl" style="left:283px;top:26px;width:32px;height:8px;background:#f1f1f1"></div><div class="c lat" style="left:2.0px;width:120px">6</div><div class="c lat" style="left:98.0px;width:120px">MS00006</div><div class="c" style="left:228.0px;width:120px"></div><div class="c lat" style="left:358.0px;width:120px">K-ME-P-0237</div><div class="c" style="left:488.0px;width:120px">上板机</div><div class="c lat" style="left:617.0px;width:120px">GSA00001</div><div class="c lat" style="left:747.0px;width:120px">SMT车间</div><div class="c" style="left:877.0px;width:120px">线长</div><div class="c lat" style="left:1008.0px;width:120px">1000</div><div class="c" style="left:1138.0px;width:120px">合格</div><div class="c lat" style="left:1266.0px;width:120px">OK</div><div class="c" style="left:1394.0px;width:120px">是</div><div class="c lat" style="left:1526.0px;width:120px">1994-08-22</div></div>
<div class="row" style="top:286px"><div class="cb" style="top:14px"></div><div class="bl" style="left:259px;top:11px;width:56px;height:8px;background:#e3e3e3"></div><div class="bl" style="left:259px;top:19px;width:8px;height:8px;background:#c8c8c8"></div><div class="bl" style="left:267px;top:19px;width:8px;height:8px;background:#dadada"></div><div class="bl" style="left:275px;top:19px;width:8px;height:8px;background:#d2d2d2"></div><div class="bl" style="left:283px;top:19px;width:8px;height:8px;background:#dcdcdc"></div><div class="bl" style="left:291px;top:19px;width:8px;height:8px;background:#d8d8d8"></div><div class="bl" style="left:299px;top:19px;width:16px;height:8px;background:#c5c5c5"></div><div class="c lat" style="left:2.0px;width:120px">7</div><div class="c lat" style="left:98.0px;width:120px">MS00007</div><div class="c" style="left:228.0px;width:120px"></div><div class="c lat" style="left:358.0px;width:120px">K-ME-P-0237</div><div class="c" style="left:488.0px;width:120px">上板机</div><div class="c lat" style="left:617.0px;width:120px">GSA00001</div><div class="c lat" style="left:747.0px;width:120px">SMT车间</div><div class="c" style="left:877.0px;width:120px">线长</div><div class="c lat" style="left:1008.0px;width:120px">1000</div><div class="c" style="left:1138.0px;width:120px">不合格</div><div class="c lat" style="left:1266.0px;width:120px">NG</div><div class="c" style="left:1394.0px;width:120px">否</div><div class="c lat" style="left:1526.0px;width:120px">1994-08-22</div></div>
<div class="row alt" style="top:327px"><div class="cb" style="top:14px"></div><div class="bl" style="left:259px;top:10px;width:8px;height:8px;background:#e2e2e2"></div><div class="bl" style="left:267px;top:10px;width:8px;height:8px;background:#e6e6e6"></div><div class="bl" style="left:275px;top:10px;width:8px;height:8px;background:#e4e4e4"></div><div class="bl" style="left:283px;top:10px;width:8px;height:8px;background:#e8e8e8"></div><div class="bl" style="left:291px;top:10px;width:8px;height:8px;background:#d8d8d8"></div><div class="bl" style="left:299px;top:10px;width:8px;height:8px;background:#e6e6e6"></div><div class="bl" style="left:307px;top:10px;width:8px;height:8px;background:#e4e4e4"></div><div class="bl" style="left:259px;top:18px;width:8px;height:8px;background:#c8c8c8"></div><div class="bl" style="left:267px;top:18px;width:8px;height:8px;background:#c6c6c6"></div><div class="bl" style="left:275px;top:18px;width:8px;height:8px;background:#b8b8b8"></div><div class="bl" style="left:283px;top:18px;width:8px;height:8px;background:#e2e2e2"></div><div class="bl" style="left:291px;top:18px;width:8px;height:8px;background:#cacaca"></div><div class="bl" style="left:299px;top:18px;width:8px;height:8px;background:#cccccc"></div><div class="bl" style="left:307px;top:18px;width:8px;height:8px;background:#bababa"></div><div class="bl" style="left:283px;top:26px;width:32px;height:8px;background:#f1f1f1"></div><div class="c lat" style="left:2.0px;width:120px">8</div><div class="c lat" style="left:98.0px;width:120px">MS00008</div><div class="c" style="left:228.0px;width:120px"></div><div class="c lat" style="left:358.0px;width:120px">K-ME-P-0237</div><div class="c" style="left:488.0px;width:120px">上板机</div><div class="c lat" style="left:617.0px;width:120px">GSA00001</div><div class="c lat" style="left:747.0px;width:120px">SMT车间</div><div class="c" style="left:877.0px;width:120px">线长</div><div class="c lat" style="left:1008.0px;width:120px">1000</div><div class="c" style="left:1138.0px;width:120px">不合格</div><div class="c lat" style="left:1266.0px;width:120px">NG</div><div class="c" style="left:1394.0px;width:120px">否</div><div class="c lat" style="left:1526.0px;width:120px">1994-08-22</div></div>
<div class="row" style="top:368px"><div class="cb" style="top:14px"></div><div class="bl" style="left:259px;top:11px;width:56px;height:8px;background:#e3e3e3"></div><div class="bl" style="left:259px;top:19px;width:8px;height:8px;background:#c8c8c8"></div><div class="bl" style="left:267px;top:19px;width:8px;height:8px;background:#dadada"></div><div class="bl" style="left:275px;top:19px;width:8px;height:8px;background:#d2d2d2"></div><div class="bl" style="left:283px;top:19px;width:8px;height:8px;background:#dcdcdc"></div><div class="bl" style="left:291px;top:19px;width:8px;height:8px;background:#d8d8d8"></div><div class="bl" style="left:299px;top:19px;width:16px;height:8px;background:#c5c5c5"></div><div class="c lat" style="left:2.0px;width:120px">9</div><div class="c lat" style="left:98.0px;width:120px">MS00009</div><div class="c" style="left:228.0px;width:120px"></div><div class="c lat" style="left:358.0px;width:120px">K-ME-P-0237</div><div class="c" style="left:488.0px;width:120px">上板机</div><div class="c lat" style="left:617.0px;width:120px">GSA00001</div><div class="c lat" style="left:747.0px;width:120px">SMT车间</div><div class="c" style="left:877.0px;width:120px">线长</div><div class="c lat" style="left:1008.0px;width:120px">1000</div><div class="c" style="left:1138.0px;width:120px">不合格</div><div class="c lat" style="left:1266.0px;width:120px">NG</div><div class="c" style="left:1394.0px;width:120px">否</div><div class="c lat" style="left:1526.0px;width:120px">1994-08-22</div></div>
<div class="row alt" style="top:409px"><div class="cb" style="top:14px"></div><div class="bl" style="left:259px;top:10px;width:8px;height:8px;background:#e2e2e2"></div><div class="bl" style="left:267px;top:10px;width:8px;height:8px;background:#e6e6e6"></div><div class="bl" style="left:275px;top:10px;width:8px;height:8px;background:#e4e4e4"></div><div class="bl" style="left:283px;top:10px;width:8px;height:8px;background:#e8e8e8"></div><div class="bl" style="left:291px;top:10px;width:8px;height:8px;background:#d8d8d8"></div><div class="bl" style="left:299px;top:10px;width:8px;height:8px;background:#e6e6e6"></div><div class="bl" style="left:307px;top:10px;width:8px;height:8px;background:#e4e4e4"></div><div class="bl" style="left:259px;top:18px;width:8px;height:8px;background:#c8c8c8"></div><div class="bl" style="left:267px;top:18px;width:8px;height:8px;background:#c6c6c6"></div><div class="bl" style="left:275px;top:18px;width:8px;height:8px;background:#b8b8b8"></div><div class="bl" style="left:283px;top:18px;width:8px;height:8px;background:#e2e2e2"></div><div class="bl" style="left:291px;top:18px;width:8px;height:8px;background:#cacaca"></div><div class="bl" style="left:299px;top:18px;width:8px;height:8px;background:#cccccc"></div><div class="bl" style="left:307px;top:18px;width:8px;height:8px;background:#bababa"></div><div class="bl" style="left:283px;top:26px;width:32px;height:8px;background:#f1f1f1"></div><div class="c lat" style="left:2.0px;width:120px">10</div><div class="c lat" style="left:98.0px;width:120px">MS00010</div><div class="c" style="left:228.0px;width:120px"></div><div class="c lat" style="left:358.0px;width:120px">K-ME-P-0237</div><div class="c" style="left:488.0px;width:120px">上板机</div><div class="c lat" style="left:617.0px;width:120px">GSA00001</div><div class="c lat" style="left:747.0px;width:120px">SMT车间</div><div class="c" style="left:877.0px;width:120px">线长</div><div class="c lat" style="left:1008.0px;width:120px">1000</div><div class="c" style="left:1138.0px;width:120px">不合格</div><div class="c lat" style="left:1266.0px;width:120px">NG</div><div class="c" style="left:1394.0px;width:120px">否</div><div class="c lat" style="left:1526.0px;width:120px">1994-08-22</div></div>
<div class="row" style="top:450px"><div class="cb" style="top:14px"></div><div class="bl" style="left:259px;top:11px;width:56px;height:8px;background:#e3e3e3"></div><div class="bl" style="left:259px;top:19px;width:8px;height:8px;background:#c8c8c8"></div><div class="bl" style="left:267px;top:19px;width:8px;height:8px;background:#dadada"></div><div class="bl" style="left:275px;top:19px;width:8px;height:8px;background:#d2d2d2"></div><div class="bl" style="left:283px;top:19px;width:8px;height:8px;background:#dcdcdc"></div><div class="bl" style="left:291px;top:19px;width:8px;height:8px;background:#d8d8d8"></div><div class="bl" style="left:299px;top:19px;width:16px;height:8px;background:#c5c5c5"></div><div class="c lat" style="left:2.0px;width:120px">11</div><div class="c lat" style="left:98.0px;width:120px">MS00011</div><div class="c" style="left:228.0px;width:120px"></div><div class="c lat" style="left:358.0px;width:120px">K-ME-P-0237</div><div class="c" style="left:488.0px;width:120px">上板机</div><div class="c lat" style="left:617.0px;width:120px">GSA00001</div><div class="c lat" style="left:747.0px;width:120px">SMT车间</div><div class="c" style="left:877.0px;width:120px">线长</div><div class="c lat" style="left:1008.0px;width:120px">1000</div><div class="c" style="left:1138.0px;width:120px">不合格</div><div class="c lat" style="left:1266.0px;width:120px">NG</div><div class="c" style="left:1394.0px;width:120px">否</div><div class="c lat" style="left:1526.0px;width:120px">1994-08-22</div></div>
<div class="row alt" style="top:491px"><div class="cb" style="top:14px"></div><div class="bl" style="left:259px;top:10px;width:8px;height:8px;background:#e2e2e2"></div><div class="bl" style="left:267px;top:10px;width:8px;height:8px;background:#e6e6e6"></div><div class="bl" style="left:275px;top:10px;width:8px;height:8px;background:#e4e4e4"></div><div class="bl" style="left:283px;top:10px;width:8px;height:8px;background:#e8e8e8"></div><div class="bl" style="left:291px;top:10px;width:8px;height:8px;background:#d8d8d8"></div><div class="bl" style="left:299px;top:10px;width:8px;height:8px;background:#e6e6e6"></div><div class="bl" style="left:307px;top:10px;width:8px;height:8px;background:#e4e4e4"></div><div class="bl" style="left:259px;top:18px;width:8px;height:8px;background:#c8c8c8"></div><div class="bl" style="left:267px;top:18px;width:8px;height:8px;background:#c6c6c6"></div><div class="bl" style="left:275px;top:18px;width:8px;height:8px;background:#b8b8b8"></div><div class="bl" style="left:283px;top:18px;width:8px;height:8px;background:#e2e2e2"></div><div class="bl" style="left:291px;top:18px;width:8px;height:8px;background:#cacaca"></div><div class="bl" style="left:299px;top:18px;width:8px;height:8px;background:#cccccc"></div><div class="bl" style="left:307px;top:18px;width:8px;height:8px;background:#bababa"></div><div class="bl" style="left:283px;top:26px;width:32px;height:8px;background:#f1f1f1"></div><div class="c lat" style="left:2.0px;width:120px">12</div><div class="c lat" style="left:98.0px;width:120px">MS00012</div><div class="c" style="left:228.0px;width:120px"></div><div class="c lat" style="left:358.0px;width:120px">K-ME-P-0237</div><div class="c" style="left:488.0px;width:120px">上板机</div><div class="c lat" style="left:617.0px;width:120px">GSA00001</div><div class="c lat" style="left:747.0px;width:120px">SMT车间</div><div class="c" style="left:877.0px;width:120px">线长</div><div class="c lat" style="left:1008.0px;width:120px">1000</div><div class="c" style="left:1138.0px;width:120px">不合格</div><div class="c lat" style="left:1266.0px;width:120px">NG</div><div class="c" style="left:1394.0px;width:120px">否</div><div class="c lat" style="left:1526.0px;width:120px">1994-08-22</div></div>
<div class="row" style="top:532px"><div class="cb" style="top:14px"></div><div class="bl" style="left:259px;top:11px;width:56px;height:8px;background:#e3e3e3"></div><div class="bl" style="left:259px;top:19px;width:8px;height:8px;background:#c8c8c8"></div><div class="bl" style="left:267px;top:19px;width:8px;height:8px;background:#dadada"></div><div class="bl" style="left:275px;top:19px;width:8px;height:8px;background:#d2d2d2"></div><div class="bl" style="left:283px;top:19px;width:8px;height:8px;background:#dcdcdc"></div><div class="bl" style="left:291px;top:19px;width:8px;height:8px;background:#d8d8d8"></div><div class="bl" style="left:299px;top:19px;width:16px;height:8px;background:#c5c5c5"></div><div class="c lat" style="left:2.0px;width:120px">13</div><div class="c lat" style="left:98.0px;width:120px">MS00013</div><div class="c" style="left:228.0px;width:120px"></div><div class="c lat" style="left:358.0px;width:120px">K-ME-P-0237</div><div class="c" style="left:488.0px;width:120px">上板机</div><div class="c lat" style="left:617.0px;width:120px">GSA00001</div><div class="c lat" style="left:747.0px;width:120px">SMT车间</div><div class="c" style="left:877.0px;width:120px">线长</div><div class="c lat" style="left:1008.0px;width:120px">1000</div><div class="c" style="left:1138.0px;width:120px">不合格</div><div class="c lat" style="left:1266.0px;width:120px">NG</div><div class="c" style="left:1394.0px;width:120px">否</div><div class="c lat" style="left:1526.0px;width:120px">1994-08-22</div></div>
<div class="row alt" style="top:573px"><div class="cb" style="top:14px"></div><div class="bl" style="left:259px;top:10px;width:8px;height:8px;background:#e2e2e2"></div><div class="bl" style="left:267px;top:10px;width:8px;height:8px;background:#e6e6e6"></div><div class="bl" style="left:275px;top:10px;width:8px;height:8px;background:#e4e4e4"></div><div class="bl" style="left:283px;top:10px;width:8px;height:8px;background:#e8e8e8"></div><div class="bl" style="left:291px;top:10px;width:8px;height:8px;background:#d8d8d8"></div><div class="bl" style="left:299px;top:10px;width:8px;height:8px;background:#e6e6e6"></div><div class="bl" style="left:307px;top:10px;width:8px;height:8px;background:#e4e4e4"></div><div class="bl" style="left:259px;top:18px;width:8px;height:8px;background:#c8c8c8"></div><div class="bl" style="left:267px;top:18px;width:8px;height:8px;background:#c6c6c6"></div><div class="bl" style="left:275px;top:18px;width:8px;height:8px;background:#b8b8b8"></div><div class="bl" style="left:283px;top:18px;width:8px;height:8px;background:#e2e2e2"></div><div class="bl" style="left:291px;top:18px;width:8px;height:8px;background:#cacaca"></div><div class="bl" style="left:299px;top:18px;width:8px;height:8px;background:#cccccc"></div><div class="bl" style="left:307px;top:18px;width:8px;height:8px;background:#bababa"></div><div class="bl" style="left:283px;top:26px;width:32px;height:8px;background:#f1f1f1"></div><div class="c lat" style="left:2.0px;width:120px">14</div><div class="c lat" style="left:98.0px;width:120px">MS00014</div><div class="c" style="left:228.0px;width:120px"></div><div class="c lat" style="left:358.0px;width:120px">K-ME-P-0237</div><div class="c" style="left:488.0px;width:120px">上板机</div><div class="c lat" style="left:617.0px;width:120px">GSA00001</div><div class="c lat" style="left:747.0px;width:120px">SMT车间</div><div class="c" style="left:877.0px;width:120px">线长</div><div class="c lat" style="left:1008.0px;width:120px">1000</div><div class="c" style="left:1138.0px;width:120px">不合格</div><div class="c lat" style="left:1266.0px;width:120px">NG</div><div class="c" style="left:1394.0px;width:120px">否</div><div class="c lat" style="left:1526.0px;width:120px">1994-08-22</div></div>
<div class="row" style="top:614px"><div class="cb" style="top:14px"></div><div class="bl" style="left:259px;top:11px;width:56px;height:8px;background:#e3e3e3"></div><div class="bl" style="left:259px;top:19px;width:8px;height:8px;background:#c8c8c8"></div><div class="bl" style="left:267px;top:19px;width:8px;height:8px;background:#dadada"></div><div class="bl" style="left:275px;top:19px;width:8px;height:8px;background:#d2d2d2"></div><div class="bl" style="left:283px;top:19px;width:8px;height:8px;background:#dcdcdc"></div><div class="bl" style="left:291px;top:19px;width:8px;height:8px;background:#d8d8d8"></div><div class="bl" style="left:299px;top:19px;width:16px;height:8px;background:#c5c5c5"></div><div class="c lat" style="left:2.0px;width:120px">15</div><div class="c lat" style="left:98.0px;width:120px">MS00015</div><div class="c" style="left:228.0px;width:120px"></div><div class="c lat" style="left:358.0px;width:120px">K-ME-P-0237</div><div class="c" style="left:488.0px;width:120px">上板机</div><div class="c lat" style="left:617.0px;width:120px">GSA00001</div><div class="c lat" style="left:747.0px;width:120px">SMT车间</div><div class="c" style="left:877.0px;width:120px">线长</div><div class="c lat" style="left:1008.0px;width:120px">1000</div><div class="c" style="left:1138.0px;width:120px">不合格</div><div class="c lat" style="left:1266.0px;width:120px">NG</div><div class="c" style="left:1394.0px;width:120px">否</div><div class="c lat" style="left:1526.0px;width:120px">1994-08-22</div></div>
<div id="hs"><svg viewBox="0 0 5 9" style="left:11px;top:5px;width:5px;height:9px"><path d="M5 0V9L0 4.5Z" fill="#444"/></svg><div style="position:absolute;left:20px;top:2px;width:840px;height:14px;border:1px solid #c4c4c4;background:linear-gradient(#fff,#e9e9e9)"></div><svg viewBox="0 0 4.4 9" style="left:1664px;top:4.5px;width:4.4px;height:9px"><path d="M0 0V9L4.4 4.5Z" fill="#444"/></svg></div>
<div id="pg"><svg viewBox="0 0 6 8" style="left:10px;top:10px;width:6px;height:8px"><rect x="0" y="0" width="1.6" height="8" fill="#444"/><path d="M6 0V8L1.6 4Z" fill="#444"/></svg>
<svg viewBox="0 0 5 8" style="left:32px;top:10px;width:5px;height:8px"><path d="M5 0V8L0 4Z" fill="#444"/></svg>
<div style="position:absolute;left:51px;top:7px;width:1px;height:14px;background:#555"></div>
<div style="position:absolute;left:62px;top:5px">第</div>
<div style="position:absolute;left:78px;top:4px;width:27px;height:19px;background:#fff;border:1px solid #dcdcdc;text-align:center;line-height:20px">1</div>
<div style="position:absolute;left:111px;top:5px">页，共1页</div>
<div style="position:absolute;left:177px;top:7px;width:1px;height:14px;background:#555"></div>
<svg viewBox="0 0 5 8" style="left:193px;top:10px;width:4px;height:8px"><path d="M0 0V8L4.4 4Z" fill="#444"/></svg>
<svg viewBox="0 0 6 8" style="left:207px;top:10px;width:6px;height:8px"><path d="M0 0V8L4.4 4Z" fill="#444"/><rect x="4.4" y="0" width="1.6" height="8" fill="#444"/></svg>
<div style="position:absolute;left:1609px;top:5px">共15记录</div></div>
</div>
</body></html>
